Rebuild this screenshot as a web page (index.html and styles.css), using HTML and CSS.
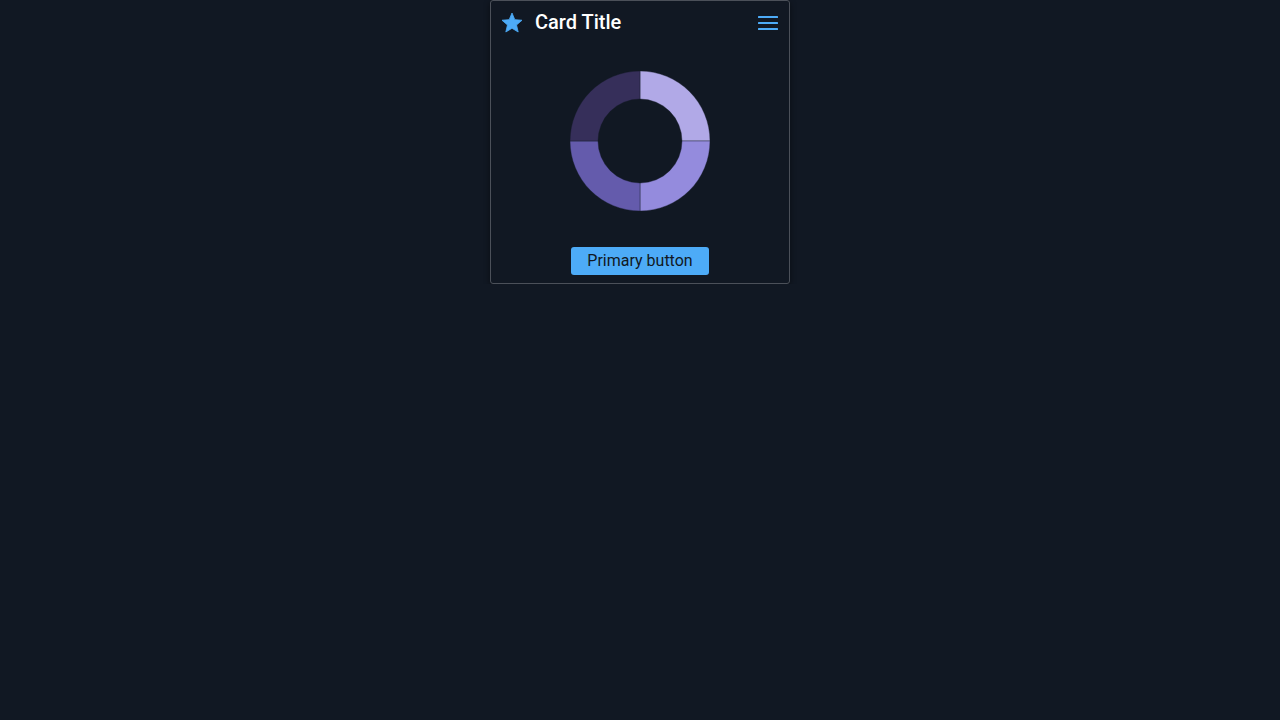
FILE: index.html
```html
<!DOCTYPE html>
<html>
<head>
<meta charset="utf-8">
<link rel="stylesheet" href="styles.css">
</head>
<body>
<div class="card">
  <div class="card-header">
    <svg class="icon star" viewBox="0 0 24 24" width="24" height="24"><path d="M12 17.27L18.18 21l-1.64-7.03L22 9.24l-7.19-.61L12 2 9.19 8.63 2 9.24l5.46 4.73L5.82 21z" fill="#4dabf7" stroke="#4dabf7" stroke-width="0.8" stroke-linejoin="round"/></svg>
    <div class="title">Card Title</div>
    <svg class="icon menu" viewBox="0 0 20 20" width="20" height="20"><rect x="0" y="3" width="20" height="2" rx="0.5" fill="#4dabf7"/><rect x="0" y="9" width="20" height="2" rx="0.5" fill="#4dabf7"/><rect x="0" y="15" width="20" height="2" rx="0.5" fill="#4dabf7"/></svg>
  </div>
  <div class="card-body">
    <svg class="donut" viewBox="0 0 140 140" width="140" height="140">
      <g stroke="#111823" stroke-width="0.4">
        <path d="M70,0 A70,70 0 0 1 140,70 L112,70 A42,42 0 0 0 70,28 Z" fill="#b1a9e7"/>
        <path d="M140,70 A70,70 0 0 1 70,140 L70,112 A42,42 0 0 0 112,70 Z" fill="#948bdd"/>
        <path d="M70,140 A70,70 0 0 1 0,70 L28,70 A42,42 0 0 0 70,112 Z" fill="#645bac"/>
        <path d="M0,70 A70,70 0 0 1 70,0 L70,28 A42,42 0 0 0 28,70 Z" fill="#362f5a"/>
      </g>
    </svg>
  </div>
  <div class="card-footer">
    <button class="btn-primary">Primary button</button>
  </div>
</div>
</body>
</html>
```
FILE: styles.css
```css
html, body {
  margin: 0;
  padding: 0;
  background: #111823;
  font-family: Roboto, "Noto Sans", sans-serif;
}
.card {
  width: 298px;
  margin: 0 auto;
  border: 1px solid #4b5059;
  border-radius: 3px;
  background: #111823;
  box-shadow: 0 2px 6px rgba(0, 0, 0, 0.45);
}
.card-header {
  display: flex;
  align-items: center;
  height: 43px;
  padding: 0 11px 0 9px;
}
.icon {
  display: block;
  flex: none;
}
.title {
  flex: 1;
  margin-left: 11px;
  margin-top: -1px;
  color: #ffffff;
  font-size: 20px;
  font-weight: 500;
}
.card-body {
  display: flex;
  justify-content: center;
  padding-top: 27px;
}
.donut {
  display: block;
}
.card-footer {
  display: flex;
  justify-content: center;
  padding: 36px 0 8px;
}
.btn-primary {
  width: 138px;
  height: 28px;
  border: none;
  border-radius: 3px;
  background: #4dabf7;
  color: #111823;
  font-family: Roboto, "Noto Sans", sans-serif;
  font-size: 16px;
  padding: 0 0 2px;
}
```
